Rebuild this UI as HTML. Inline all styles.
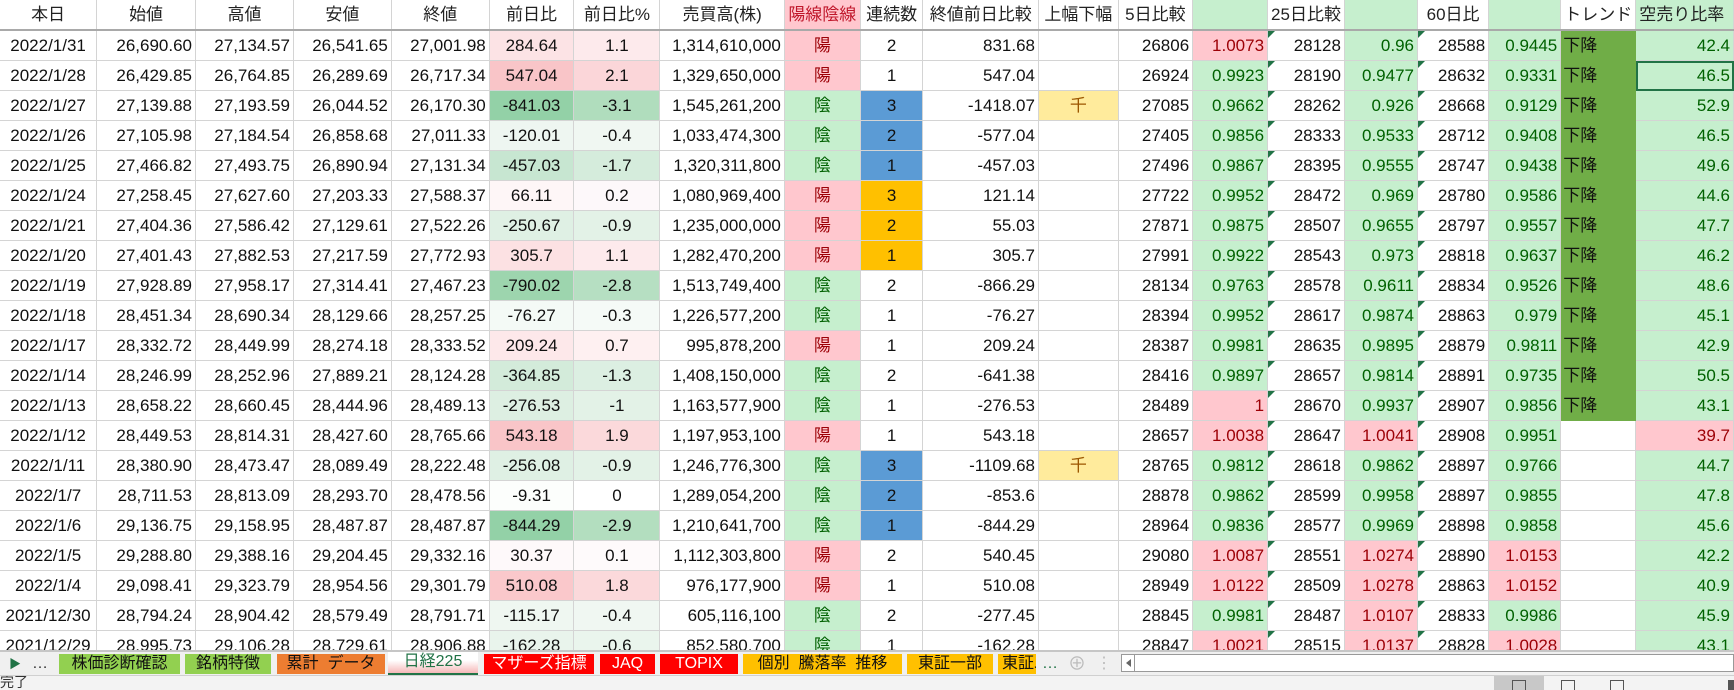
<!DOCTYPE html>
<html><head><meta charset="utf-8">
<style>
*{margin:0;padding:0;box-sizing:border-box}
body{width:1734px;height:690px;overflow:hidden;background:#fff;font-family:"Liberation Sans","Noto Sans CJK JP",sans-serif;position:relative}
#grid{position:absolute;left:0;top:0;width:1734px;height:650px;overflow:hidden}
table{border-collapse:collapse;table-layout:fixed;font-size:17px;color:#111}
td{height:30px;max-height:30px;line-height:29px;vertical-align:middle;border-right:1px solid #d4d4d4;border-bottom:1px solid #d4d4d4;padding:0 3px;white-space:nowrap;overflow:hidden;text-align:right;position:relative}
tr.h td{text-align:center;border-bottom:2px solid #a9a9a9;color:#222}
td.c{text-align:center}
td.l{text-align:left}
.d{display:flex;justify-content:center;overflow:hidden;width:100%;line-height:29px}
.p{background:#FFC7CE;color:#9C0006}
.g{background:#C6EFCE;color:#006100}
.b{background:#5B9BD5}
.o{background:#FFC000}
.y{background:#FFEB9C;color:#9C5700}
.t{background:#70AD47;color:#111;text-align:left;padding-left:2px;border-color:#70AD47}
.tri::before{content:"";position:absolute;left:0;top:0;border-top:7px solid #217346;border-right:7px solid transparent}
.sel{outline:2px solid #217346;outline-offset:-2px}
#tabs{position:absolute;left:0;top:650px;width:1734px;height:25px;background:#f0f0f0;border-top:2px solid #c6c6c6}
.tab{position:absolute;top:2px;height:20px;font-size:16px;line-height:20px;text-align:center;white-space:nowrap;overflow:hidden}
#status{position:absolute;left:0;top:675px;width:1734px;height:15px;background:#f3f3f3;border-top:1px solid #d0d0d0;font-size:14px;overflow:hidden}
</style></head><body>
<div id="grid">
<table>
<colgroup>
<col style="width:97px"><col style="width:100px"><col style="width:99px"><col style="width:99px"><col style="width:99px"><col style="width:86px"><col style="width:87px"><col style="width:125px"><col style="width:76px"><col style="width:63px"><col style="width:116px"><col style="width:80px"><col style="width:75px"><col style="width:76px"><col style="width:74px"><col style="width:74px"><col style="width:72px"><col style="width:73px"><col style="width:65px"><col style="width:98px">
</colgroup>
<tr class="h"><td>本日</td><td>始値</td><td>高値</td><td>安値</td><td>終値</td><td>前日比</td><td>前日比%</td><td>売買高(株)</td><td class="p" style="color:#c0172b">陽線陰線</td><td>連続数</td><td>終値前日比較</td><td>上幅下幅</td><td class="l">5日比較</td><td class="g"></td><td class="l">25日比較</td><td class="g"></td><td class="l">60日比</td><td class="g"></td><td class="l">トレンド</td><td class="g" style="color:#222;text-align:left">空売り比率</td></tr>

<tr><td><div class="d">2022/1/31</div></td><td>26,690.60</td><td>27,134.57</td><td>26,541.65</td><td>27,001.98</td><td class="c" style="background:#FCE3E5">284.64</td><td class="c" style="background:#FDEAEC">1.1</td><td>1,314,610,000</td><td class="c p">陽</td><td class="c">2</td><td>831.68</td><td></td><td>26806</td><td class="p">1.0073</td><td class="tri">28128</td><td class="g">0.96</td><td class="tri">28588</td><td class="g">0.9445</td><td class="t">下降</td><td class="g">42.4</td></tr>
<tr><td><div class="d">2022/1/28</div></td><td>26,429.85</td><td>26,764.85</td><td>26,289.69</td><td>26,717.34</td><td class="c" style="background:#F9C5C8">547.04</td><td class="c" style="background:#FBD6D9">2.1</td><td>1,329,650,000</td><td class="c p">陽</td><td class="c">1</td><td>547.04</td><td></td><td>26924</td><td class="g">0.9923</td><td class="tri">28190</td><td class="g">0.9477</td><td class="tri">28632</td><td class="g">0.9331</td><td class="t">下降</td><td class="g sel">46.5</td></tr>
<tr><td><div class="d">2022/1/27</div></td><td>27,139.88</td><td>27,193.59</td><td>26,044.52</td><td>26,170.30</td><td class="c" style="background:#93D1A7">-841.03</td><td class="c" style="background:#B0DDBD">-3.1</td><td>1,545,261,200</td><td class="c g">陰</td><td class="c b">3</td><td>-1418.07</td><td class="c y">千</td><td>27085</td><td class="g">0.9662</td><td class="tri">28262</td><td class="g">0.926</td><td class="tri">28668</td><td class="g">0.9129</td><td class="t">下降</td><td class="g">52.9</td></tr>
<tr><td><div class="d">2022/1/26</div></td><td>27,105.98</td><td>27,184.54</td><td>26,858.68</td><td>27,011.33</td><td class="c" style="background:#EEF6F1">-120.01</td><td class="c" style="background:#F0F7F2">-0.4</td><td>1,033,474,300</td><td class="c g">陰</td><td class="c b">2</td><td>-577.04</td><td></td><td>27405</td><td class="g">0.9856</td><td class="tri">28333</td><td class="g">0.9533</td><td class="tri">28712</td><td class="g">0.9408</td><td class="t">下降</td><td class="g">46.5</td></tr>
<tr><td><div class="d">2022/1/25</div></td><td>27,466.82</td><td>27,493.75</td><td>26,890.94</td><td>27,131.34</td><td class="c" style="background:#C7E6D1">-457.03</td><td class="c" style="background:#D5ECDC">-1.7</td><td>1,320,311,800</td><td class="c g">陰</td><td class="c b">1</td><td>-457.03</td><td></td><td>27496</td><td class="g">0.9867</td><td class="tri">28395</td><td class="g">0.9555</td><td class="tri">28747</td><td class="g">0.9438</td><td class="t">下降</td><td class="g">49.6</td></tr>
<tr><td><div class="d">2022/1/24</div></td><td>27,258.45</td><td>27,627.60</td><td>27,203.33</td><td>27,588.37</td><td class="c" style="background:#FEF6F7">66.11</td><td class="c" style="background:#FDF8FA">0.2</td><td>1,080,969,400</td><td class="c p">陽</td><td class="c o">3</td><td>121.14</td><td></td><td>27722</td><td class="g">0.9952</td><td class="tri">28472</td><td class="g">0.969</td><td class="tri">28780</td><td class="g">0.9586</td><td class="t">下降</td><td class="g">44.6</td></tr>
<tr><td><div class="d">2022/1/21</div></td><td>27,404.36</td><td>27,586.42</td><td>27,129.61</td><td>27,522.26</td><td class="c" style="background:#DFF0E4">-250.67</td><td class="c" style="background:#E3F2E7">-0.9</td><td>1,235,000,000</td><td class="c p">陽</td><td class="c o">2</td><td>55.03</td><td></td><td>27871</td><td class="g">0.9875</td><td class="tri">28507</td><td class="g">0.9655</td><td class="tri">28797</td><td class="g">0.9557</td><td class="t">下降</td><td class="g">47.7</td></tr>
<tr><td><div class="d">2022/1/20</div></td><td>27,401.43</td><td>27,882.53</td><td>27,217.59</td><td>27,772.93</td><td class="c" style="background:#FCE1E3">305.7</td><td class="c" style="background:#FDEAEC">1.1</td><td>1,282,470,200</td><td class="c p">陽</td><td class="c o">1</td><td>305.7</td><td></td><td>27991</td><td class="g">0.9922</td><td class="tri">28543</td><td class="g">0.973</td><td class="tri">28818</td><td class="g">0.9637</td><td class="t">下降</td><td class="g">46.2</td></tr>
<tr><td><div class="d">2022/1/19</div></td><td>27,928.89</td><td>27,958.17</td><td>27,314.41</td><td>27,467.23</td><td class="c" style="background:#9DD5AE">-790.02</td><td class="c" style="background:#B6DFC2">-2.8</td><td>1,513,749,400</td><td class="c g">陰</td><td class="c">2</td><td>-866.29</td><td></td><td>28134</td><td class="g">0.9763</td><td class="tri">28578</td><td class="g">0.9611</td><td class="tri">28834</td><td class="g">0.9526</td><td class="t">下降</td><td class="g">48.6</td></tr>
<tr><td><div class="d">2022/1/18</div></td><td>28,451.34</td><td>28,690.34</td><td>28,129.66</td><td>28,257.25</td><td class="c" style="background:#F4FAF6">-76.27</td><td class="c" style="background:#F5FAF7">-0.3</td><td>1,226,577,200</td><td class="c g">陰</td><td class="c">1</td><td>-76.27</td><td></td><td>28394</td><td class="g">0.9952</td><td class="tri">28617</td><td class="g">0.9874</td><td class="tri">28863</td><td class="g">0.979</td><td class="t">下降</td><td class="g">45.1</td></tr>
<tr><td><div class="d">2022/1/17</div></td><td>28,332.72</td><td>28,449.99</td><td>28,274.18</td><td>28,333.52</td><td class="c" style="background:#FDE8EA">209.24</td><td class="c" style="background:#FEF0F1">0.7</td><td>995,878,200</td><td class="c p">陽</td><td class="c">1</td><td>209.24</td><td></td><td>28387</td><td class="g">0.9981</td><td class="tri">28635</td><td class="g">0.9895</td><td class="tri">28879</td><td class="g">0.9811</td><td class="t">下降</td><td class="g">42.9</td></tr>
<tr><td><div class="d">2022/1/14</div></td><td>28,246.99</td><td>28,252.96</td><td>27,889.21</td><td>28,124.28</td><td class="c" style="background:#D3EBDA">-364.85</td><td class="c" style="background:#DCEFE2">-1.3</td><td>1,408,150,000</td><td class="c g">陰</td><td class="c">2</td><td>-641.38</td><td></td><td>28416</td><td class="g">0.9897</td><td class="tri">28657</td><td class="g">0.9814</td><td class="tri">28891</td><td class="g">0.9735</td><td class="t">下降</td><td class="g">50.5</td></tr>
<tr><td><div class="d">2022/1/13</div></td><td>28,658.22</td><td>28,660.45</td><td>28,444.96</td><td>28,489.13</td><td class="c" style="background:#DDEFE2">-276.53</td><td class="c" style="background:#E3F2E7">-1</td><td>1,163,577,900</td><td class="c g">陰</td><td class="c">1</td><td>-276.53</td><td></td><td>28489</td><td class="p">1</td><td class="tri">28670</td><td class="g">0.9937</td><td class="tri">28907</td><td class="g">0.9856</td><td class="t">下降</td><td class="g">43.1</td></tr>
<tr><td><div class="d">2022/1/12</div></td><td>28,449.53</td><td>28,814.31</td><td>28,427.60</td><td>28,765.66</td><td class="c" style="background:#F9C5C8">543.18</td><td class="c" style="background:#FBD9DB">1.9</td><td>1,197,953,100</td><td class="c p">陽</td><td class="c">1</td><td>543.18</td><td></td><td>28657</td><td class="p">1.0038</td><td class="tri">28647</td><td class="p">1.0041</td><td class="tri">28908</td><td class="g">0.9951</td><td></td><td class="p">39.7</td></tr>
<tr><td><div class="d">2022/1/11</div></td><td>28,380.90</td><td>28,473.47</td><td>28,089.49</td><td>28,222.48</td><td class="c" style="background:#DFF0E4">-256.08</td><td class="c" style="background:#E3F2E7">-0.9</td><td>1,246,776,300</td><td class="c g">陰</td><td class="c b">3</td><td>-1109.68</td><td class="c y">千</td><td>28765</td><td class="g">0.9812</td><td class="tri">28618</td><td class="g">0.9862</td><td class="tri">28897</td><td class="g">0.9766</td><td></td><td class="g">44.7</td></tr>
<tr><td><div class="d">2022/1/7</div></td><td>28,711.53</td><td>28,813.09</td><td>28,293.70</td><td>28,478.56</td><td class="c" style="background:#FCFEFC">-9.31</td><td class="c">0</td><td>1,289,054,200</td><td class="c g">陰</td><td class="c b">2</td><td>-853.6</td><td></td><td>28878</td><td class="g">0.9862</td><td class="tri">28599</td><td class="g">0.9958</td><td class="tri">28897</td><td class="g">0.9855</td><td></td><td class="g">47.8</td></tr>
<tr><td><div class="d">2022/1/6</div></td><td>29,136.75</td><td>29,158.95</td><td>28,487.87</td><td>28,487.87</td><td class="c" style="background:#93D1A7">-844.29</td><td class="c" style="background:#B3DEBF">-2.9</td><td>1,210,641,700</td><td class="c g">陰</td><td class="c b">1</td><td>-844.29</td><td></td><td>28964</td><td class="g">0.9836</td><td class="tri">28577</td><td class="g">0.9969</td><td class="tri">28898</td><td class="g">0.9858</td><td></td><td class="g">45.6</td></tr>
<tr><td><div class="d">2022/1/5</div></td><td>29,288.80</td><td>29,388.16</td><td>29,204.45</td><td>29,332.16</td><td class="c" style="background:#FEF9FA">30.37</td><td class="c" style="background:#FEFAFB">0.1</td><td>1,112,303,800</td><td class="c p">陽</td><td class="c">2</td><td>540.45</td><td></td><td>29080</td><td class="p">1.0087</td><td class="tri">28551</td><td class="p">1.0274</td><td class="tri">28890</td><td class="p">1.0153</td><td></td><td class="g">42.2</td></tr>
<tr><td><div class="d">2022/1/4</div></td><td>29,098.41</td><td>29,323.79</td><td>28,954.56</td><td>29,301.79</td><td class="c" style="background:#FAC8CB">510.08</td><td class="c" style="background:#FBD9DB">1.8</td><td>976,177,900</td><td class="c p">陽</td><td class="c">1</td><td>510.08</td><td></td><td>28949</td><td class="p">1.0122</td><td class="tri">28509</td><td class="p">1.0278</td><td class="tri">28863</td><td class="p">1.0152</td><td></td><td class="g">40.9</td></tr>
<tr><td><div class="d">2021/12/30</div></td><td>28,794.24</td><td>28,904.42</td><td>28,579.49</td><td>28,791.71</td><td class="c" style="background:#EFF7F1">-115.17</td><td class="c" style="background:#F0F7F2">-0.4</td><td>605,116,100</td><td class="c g">陰</td><td class="c">2</td><td>-277.45</td><td></td><td>28845</td><td class="g">0.9981</td><td class="tri">28487</td><td class="p">1.0107</td><td class="tri">28833</td><td class="g">0.9986</td><td></td><td class="g">45.9</td></tr>
<tr><td><div class="d">2021/12/29</div></td><td>28,995.73</td><td>29,106.28</td><td>28,729.61</td><td>28,906.88</td><td class="c" style="background:#E9F4EC">-162.28</td><td class="c" style="background:#EAF5ED">-0.6</td><td>852,580,700</td><td class="c g">陰</td><td class="c">1</td><td>-162.28</td><td></td><td>28847</td><td class="p">1.0021</td><td class="tri">28515</td><td class="p">1.0137</td><td class="tri">28828</td><td class="p">1.0028</td><td></td><td class="g">43.1</td></tr>
</table>
</div>

<div id="tabs">
<div class="tab" style="left:8px;width:14px;color:#217346;font-size:12px">&#9654;</div>
<div class="tab" style="left:30px;width:20px;color:#333">…</div>
<div class="tab" style="left:59px;width:121px;background:#92D050;color:#111">株価診断確認</div>
<div class="tab" style="left:185px;width:86px;background:#92D050;color:#111">銘柄特徴</div>
<div class="tab" style="left:277px;width:108px;background:#ED7D31;color:#111">累計&nbsp;&nbsp;データ</div>
<div class="tab" style="left:388px;width:90px;top:0;height:23px;background:linear-gradient(#fff 40%,#f6b8b8);color:#217346;border-bottom:2px solid #217346">日経225</div>
<div class="tab" style="left:484px;width:110px;background:#FF0000;color:#fff">マザーズ指標</div>
<div class="tab" style="left:600px;width:55px;background:#FF0000;color:#fff">JAQ</div>
<div class="tab" style="left:660px;width:78px;background:#FF0000;color:#fff">TOPIX</div>
<div class="tab" style="left:743px;width:159px;background:#FFC000;color:#111">個別&nbsp;&nbsp;騰落率&nbsp;&nbsp;推移</div>
<div class="tab" style="left:907px;width:86px;background:#FFC000;color:#111">東証一部</div>
<div class="tab" style="left:998px;width:38px;background:#FFC000;color:#111;text-align:left;padding-left:4px">東証二部</div>
<div class="tab" style="left:1040px;width:20px;color:#217346">…</div>
<div class="tab" style="left:1067px;width:20px;color:#bbb;font-size:18px">⊕</div>
<div class="tab" style="left:1096px;width:10px;color:#bbb">⋮</div>
<div style="position:absolute;left:1121px;top:2px;width:613px;height:18px;background:#fff;border:1px solid #999"><div style="position:absolute;left:4px;top:4px;border-right:5px solid #666;border-top:4px solid transparent;border-bottom:4px solid transparent"></div><div style="position:absolute;left:12px;top:0;width:1px;height:16px;background:#999"></div></div>
</div>
<div id="status">
<span style="position:absolute;left:0;top:-4px;color:#333">完了</span>
<div style="position:absolute;left:1494px;top:0;width:50px;height:15px;background:#c8c8c8"></div>
<div style="position:absolute;left:1512px;top:4px;width:14px;height:11px;border:1px solid #555;border-bottom:none"></div>
<div style="position:absolute;left:1561px;top:4px;width:14px;height:11px;border:1px solid #555;border-bottom:none"></div>
<div style="position:absolute;left:1610px;top:4px;width:14px;height:11px;border:1px solid #555;border-bottom:none"></div>
<div style="position:absolute;left:1728px;top:4px;width:6px;height:11px;background:#555"></div>
</div>
</body></html>
